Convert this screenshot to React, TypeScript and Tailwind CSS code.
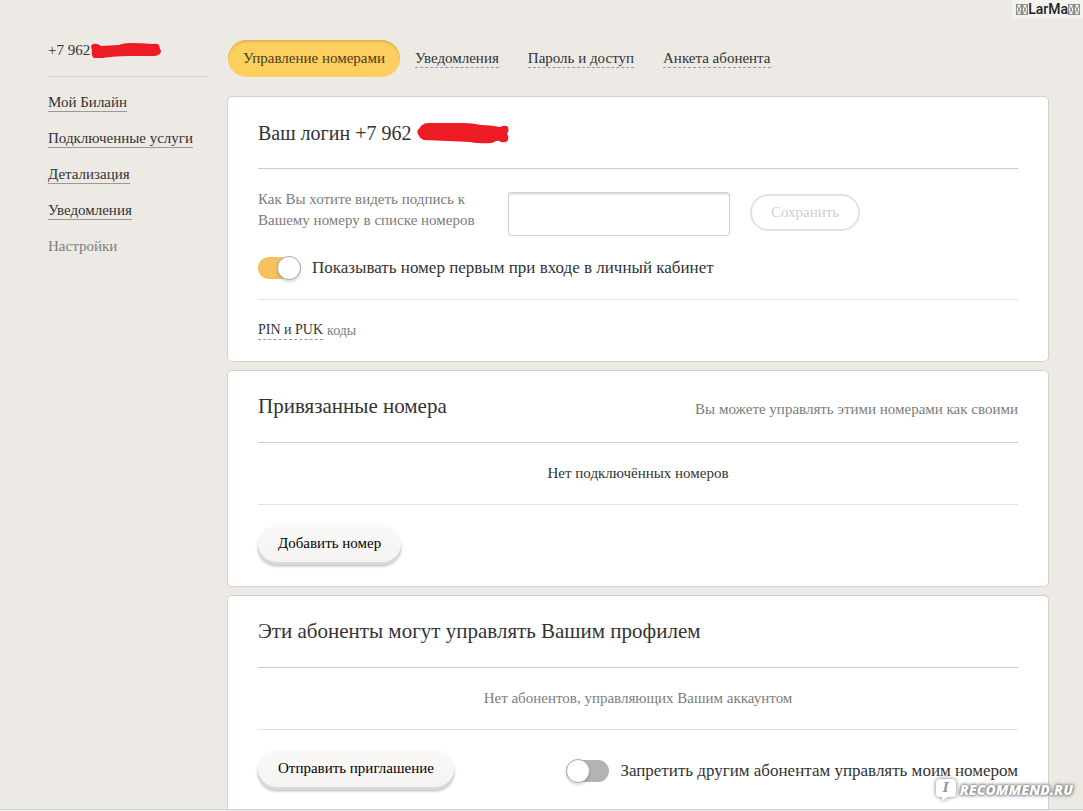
import { useState } from "react";

const menu = ["Мой Билайн", "Подключенные услуги", "Детализация", "Уведомления"];
const tabs = ["Уведомления", "Пароль и доступ", "Анкета абонента"];

function Toggle({ id, label, initial }: { id: string; label: string; initial: boolean }) {
  const [on, setOn] = useState(initial);
  return (
    <div className="flex items-center">
      <span className="relative flex h-[22px] w-[43px] shrink-0">
        <input
          id={id}
          type="checkbox"
          role="switch"
          checked={on}
          onChange={() => setOn(!on)}
          className="h-[22px] w-[43px] cursor-pointer appearance-none rounded-full bg-[#b3b3b3] checked:bg-[#f6c060]"
        />
        <span
          className={
            on
              ? "pointer-events-none absolute -top-px right-0 size-6 rounded-full border border-[#a8a8a8] bg-white shadow-[0_2px_3px_rgba(0,0,0,0.15)]"
              : "pointer-events-none absolute -top-px left-0 size-6 rounded-full border border-[#a8a8a8] bg-white shadow-[0_2px_3px_rgba(0,0,0,0.15)]"
          }
        />
      </span>
      <label htmlFor={id} className="cursor-pointer pl-[11px] text-[17px] leading-6 whitespace-nowrap text-[#333]">
        {label}
      </label>
    </div>
  );
}

function ActionButton({ children }: { children: string }) {
  return (
    <button
      type="button"
      className="h-[37px] rounded-full bg-linear-to-b from-[#fbf9f8] to-[#f6f4f3] px-5 text-[15px] whitespace-nowrap text-black shadow-[0_3px_0_#dcdad9,0_4px_3px_rgba(0,0,0,0.3)]"
    >
      {children}
    </button>
  );
}

// pair of crossed boxes on either side of the nickname
function Boxes() {
  return (
    <svg width="12" height="11" viewBox="0 0 12 11" fill="none" stroke="#555" strokeWidth="0.6" aria-hidden="true">
      <path d="M.5.5h5v10h-5ZM.5.5l5 10M5.5.5l-5 10M6.5.5h5v10h-5ZM6.5.5l5 10M11.5.5l-5 10" />
    </svg>
  );
}

function Sidebar() {
  return (
    <aside className="w-40 shrink-0 pt-[38px] text-[15px]">
      <div className="flex h-[39px] items-start border-b border-[#cfcdca] text-[#333]">
        <span className="leading-6">+7 962</span>
        <svg className="mt-1" width="72" height="18" viewBox="0 0 72 18" aria-hidden="true">
          <path
            d="M3 2 Q1 3 1 5 L2 8 Q1 14 4 16 L12 16 Q25 14 39 14 L65 14 Q71 13 71 9 Q70 7 69 3 Q67 1 63 2 Q50 1 40 1 Q33 1 29 3 L11 4 Q7 1 3 2Z"
            fill="#ed1c24"
          />
        </svg>
      </div>
      <nav className="flex flex-col items-start gap-4 pt-[15px]">
        {menu.map((item) => (
          <a key={item} href="#" className="h-5 border-b border-[#9b9996] leading-5 whitespace-nowrap text-[#333]">
            {item}
          </a>
        ))}
        <span className="leading-5 text-[#807e7b]">Настройки</span>
      </nav>
    </aside>
  );
}

function LoginCard() {
  return (
    <section className="rounded-[5px] border border-[#d2d0cd] bg-white px-[30px]">
      <h2 className="flex h-[72px] items-center border-b border-[#ccc] text-[20px] whitespace-nowrap text-[#333]">
        Ваш логин +7 962
        <svg className="ml-1" width="93" height="22" viewBox="0 0 93 22" aria-hidden="true">
          <path
            d="M8 2 Q4 4 4 6 Q0 8 2 12 Q4 17 8 18 L32 19 L54 20 Q62 22 76 21 L80 19 Q83 18 85 20 Q92 21 92 17 Q93 14 91 12 Q94 7 91 4 Q88 3 84 5 Q74 3 65 3 Q56 1 48 1 L14 1 Q9 1 8 2Z"
            fill="#ed1c24"
          />
        </svg>
      </h2>
      <form className="flex items-start pt-[23px]" onSubmit={(e) => e.preventDefault()}>
        <label htmlFor="caption" className="-mt-[3px] w-[250px] shrink-0 text-[15px] leading-[21px] text-[#7c7c7c]">
          Как Вы хотите видеть подпись к
          <br />
          Вашему номеру в списке номеров
        </label>
        <input
          id="caption"
          type="text"
          className="h-11 w-[222px] rounded-[3px] border border-[#cfcfcf] px-3 text-[15px] shadow-[inset_0_2px_1px_#e2e2e2] outline-none"
        />
        <button
          type="submit"
          disabled
          className="mt-0.5 ml-5 h-[37px] w-[110px] rounded-full border-2 border-[#e2e2e2] text-[15px] text-[#cfcfcf]"
        >
          Сохранить
        </button>
      </form>
      <div className="flex h-16 items-center border-b border-[#e3e3e3]">
        <Toggle id="first" label="Показывать номер первым при входе в личный кабинет" initial={true} />
      </div>
      <p className="flex h-[61px] items-center gap-1 text-[14px] text-[#7c7c7c]">
        <a href="#" className="border-b border-dashed border-[#999] leading-[18px] text-[#333]">
          PIN и PUK
        </a>
        коды
      </p>
    </section>
  );
}

export default function App() {
  return (
    <div className="relative min-h-screen overflow-hidden bg-[#edeae5] font-['Liberation_Serif',serif] text-[#333]">
      <div className="flex gap-[19px] pr-[34px] pl-12">
        <Sidebar />
        <main className="min-w-0 flex-1 pt-10">
          <nav className="flex items-center gap-[29px] pl-px text-[15px] whitespace-nowrap">
            <button
              type="button"
              className="-mr-[14px] h-[37px] w-[172px] rounded-full bg-[#fccf5f] text-[#4a3c1c] shadow-[inset_0_2px_2px_#dfb653]"
            >
              Управление номерами
            </button>
            {tabs.map((tab) => (
              <a key={tab} href="#" className="border-b border-dashed border-[#999] leading-[18px] text-[#333]">
                {tab}
              </a>
            ))}
          </nav>
          <div className="flex flex-col gap-2 pt-[19px]">
            <LoginCard />
            <section className="rounded-[5px] border border-[#d2d0cd] bg-white px-[30px]">
              <div className="flex h-[72px] items-center justify-between border-b border-[#ccc]">
                <h2 className="text-[21px]">Привязанные номера</h2>
                <p className="pt-1.5 text-[15px] text-[#7c7c7c]">Вы можете управлять этими номерами как своими</p>
              </div>
              <p className="flex h-[62px] items-center justify-center border-b border-[#e3e3e3] text-[15px]">
                Нет подключённых номеров
              </p>
              <div className="flex h-[81px] items-start pt-5">
                <ActionButton>Добавить номер</ActionButton>
              </div>
            </section>
            <section className="rounded-t-[5px] border border-b-0 border-[#d2d0cd] bg-white px-[30px]">
              <h2 className="flex h-[72px] items-center border-b border-[#ccc] text-[21px]">
                Эти абоненты могут управлять Вашим профилем
              </h2>
              <p className="flex h-[62px] items-center justify-center border-b border-[#e3e3e3] text-[15px] text-[#7c7c7c]">
                Нет абонентов, управляющих Вашим аккаунтом
              </p>
              <div className="flex h-[79px] items-start justify-between pt-5">
                <ActionButton>Отправить приглашение</ActionButton>
                <div className="pt-[9px]">
                  <Toggle id="deny" label="Запретить другим абонентам управлять моим номером" initial={false} />
                </div>
              </div>
            </section>
          </div>
        </main>
      </div>
      <footer className="h-0.5 border-t border-[#cfcfcf] bg-[#f2f2f2]" />

      <div className="absolute top-0 right-0 flex items-center bg-[#f4f2ef] pr-[3px] pl-1 font-['Roboto',sans-serif] text-sm leading-[18px] font-medium text-[#222]">
        <Boxes />
        LarMa
        <Boxes />
      </div>
      <div className="absolute right-[10px] bottom-2 flex items-center gap-[3px] font-['Open_Sans',sans-serif]">
        <span className="relative flex h-[26px] w-[22px] justify-center">
          <svg
            width="22"
            height="26"
            viewBox="0 0 22 26"
            className="absolute inset-0 drop-shadow-[0_0_2px_#777]"
            aria-hidden="true"
          >
            <path d="M5 2h12q4 0 4 4v10q0 4-4 4h-4l-6 4v-4h-2q-4 0-4-4V6q0-4 4-4Z" fill="#fff" />
          </svg>
          <span className="relative font-['DejaVu_Serif',serif] text-[13px] leading-[22px] font-bold text-[#999] italic">
            I
          </span>
        </span>
        <span className="text-sm leading-5 font-extrabold text-white italic [text-shadow:0_0_2px_#777,0_0_3px_#777,0_0_5px_#888]">
          RECOMMEND.RU
        </span>
      </div>
    </div>
  );
}
